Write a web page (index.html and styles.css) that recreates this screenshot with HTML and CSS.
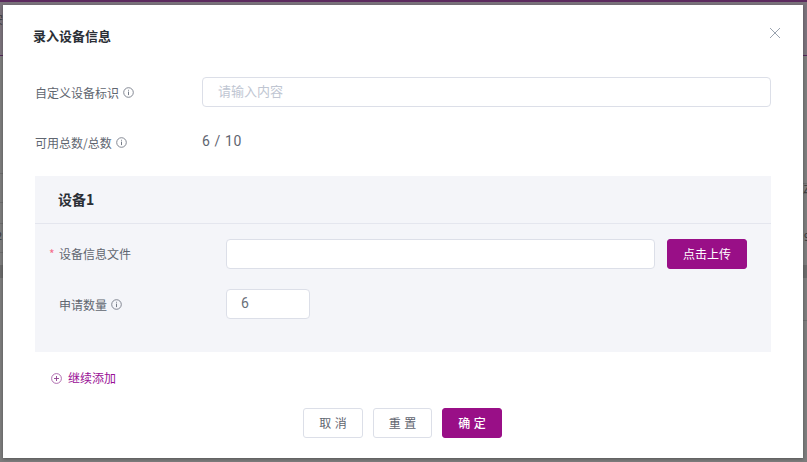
FILE: index.html
```html
<!DOCTYPE html>
<html lang="zh">
<head>
<meta charset="utf-8">
<title>录入设备信息</title>
<link rel="stylesheet" href="styles.css">
</head>
<body>
<div class="backdrop">
  <div class="bg-header"></div>
  <div class="bg-line left y173"></div>
  <div class="bg-line left y202"></div>
  <div class="bg-line left y223"></div>
  <div class="bg-line left y252"></div>
  <div class="bg-line right y183"></div>
  <div class="bg-line right y193"></div>
  <div class="bg-line right y320"></div>
  <div class="bg-block"></div>
  <span class="bg-text t1">安</span>
  <span class="bg-text t2">2</span>
  <span class="bg-text t3">Z</span>
  <span class="bg-text t4">9</span>
</div>
<section class="modal">
  <header class="modal-head">
    <h2 class="title">录入设备信息</h2>
    <svg class="close" width="12" height="12" viewBox="0 0 12 12"><path d="M1 1l10 10M11 1L1 11" stroke="#9aa3af" fill="none"/></svg>
  </header>
  <div class="row row-name">
    <div class="label">自定义设备标识<svg class="info" width="11" height="11" viewBox="0 0 11 11"><circle cx="5.5" cy="5.5" r="4.8" fill="none" stroke="#767c88" stroke-width=".9"/><path d="M5.5 2.8v.9M5.5 4.6v3.5" stroke="#767c88"/></svg></div>
    <div class="input wide placeholder">请输入内容</div>
  </div>
  <div class="row row-total">
    <div class="label">可用总数/总数<svg class="info" width="11" height="11" viewBox="0 0 11 11"><circle cx="5.5" cy="5.5" r="4.8" fill="none" stroke="#767c88" stroke-width=".9"/><path d="M5.5 2.8v.9M5.5 4.6v3.5" stroke="#767c88"/></svg></div>
    <div class="count">6 / 10</div>
  </div>
  <div class="device">
    <div class="device-head">设备1</div>
    <div class="device-body">
      <div class="drow">
        <div class="dlabel lifted"><span class="req">*</span>设备信息文件</div>
        <div class="input file"></div>
        <button class="btn primary upload">点击上传</button>
      </div>
      <div class="drow">
        <div class="dlabel">申请数量<svg class="info" width="11" height="11" viewBox="0 0 11 11"><circle cx="5.5" cy="5.5" r="4.8" fill="none" stroke="#767c88" stroke-width=".9"/><path d="M5.5 2.8v.9M5.5 4.6v3.5" stroke="#767c88"/></svg></div>
        <div class="input qty">6</div>
      </div>
    </div>
  </div>
  <div class="add">
    <svg width="11" height="11" viewBox="0 0 11 11"><circle cx="5.5" cy="5.5" r="4.9" fill="none" stroke="#a860a8" stroke-width=".9"/><path d="M3 5.5h5M5.5 3v5" stroke="#8f3f90" stroke-width=".9"/></svg>
    <span class="add-text">继续添加</span>
  </div>
  <footer class="foot">
    <button class="btn plain">取 消</button>
    <button class="btn plain narrow">重 置</button>
    <button class="btn primary ok">确 定</button>
  </footer>
</section>
</body>
</html>
```
FILE: styles.css
```css
* { box-sizing: border-box; }
html, body { margin: 0; height: 100%; }
body {
  width: 807px; height: 462px; overflow: hidden; position: relative;
  background: #7c7c7c;
  font-family: "Noto Sans CJK SC", "Liberation Sans", sans-serif;
  font-size: 12px; color: #606670;
  padding: 5px 4px 4px 3px;
}
.backdrop { position: absolute; inset: 0; }
.bg-header { position: absolute; left: 0; right: 0; top: 0; height: 56px; background: #7a727b; border-top: 2px solid #5c2a5e; border-bottom: 1px solid #54285a; }
.bg-line { position: absolute; width: 4px; height: 1px; background: #6c6c6c; }
.left { left: 0; }
.right { right: 0; }
.y173 { top: 173px; }
.y202 { top: 202px; }
.y223 { top: 223px; }
.y252 { top: 252px; }
.y183 { top: 183px; }
.y193 { top: 193px; }
.y320 { top: 320px; }
.bg-block { position: absolute; left: 0; right: 0; top: 265px; height: 13px; background: #6a6a6a; }
.bg-text { position: absolute; font-size: 11px; line-height: 12px; color: #3a3a3a; }
.t1 { left: -8px; top: 13px; }
.t2 { left: -4px; top: 229px; }
.t3 { right: -3px; top: 182px; }
.t4 { right: -3px; top: 230px; }
.modal {
  position: relative; width: 800px; height: 453px; background: #fff;
  box-shadow: 0 1px 3px rgba(0,0,0,.3);
  display: flex; flex-direction: column;
  padding: 0 32px;
}
.modal-head { height: 55px; display: flex; align-items: center; justify-content: space-between; padding-top: 6px; }
.title { margin: 0 0 0 -2px; font-size: 13px; line-height: 18px; font-weight: 700; color: #2b2f36; }
.close { margin-right: -10px; margin-top: -6px; }
.row { display: flex; align-items: center; }
.row-name { margin-top: 17px; height: 30px; }
.row-total { margin-top: 20px; height: 30px; }
.label { width: 167px; display: flex; align-items: center; gap: 4px; }
.info { flex: none; }
.input { height: 30px; border: 1px solid #dcdfe8; border-radius: 4px; background: #fff; display: flex; align-items: center; }
.wide { width: 569px; padding: 0 0 4px 15px; font-size: 13px; }
.placeholder { color: #c0c6d2; }
.count { font-family: Roboto, sans-serif; font-size: 14px; letter-spacing: .6px; color: #5f6570; margin-top: -3px; }
.device { margin-top: 19px; height: 176px; width: 736px; background: #f4f5f9; }
.device-head { height: 48px; border-bottom: 1px solid #e4e6ee; padding: 0 0 2px 23px; display: flex; align-items: center; font-size: 14px; font-weight: 700; color: #2b2f36; }
.device-body { padding-top: 15px; }
.drow { display: flex; align-items: center; height: 30px; margin-bottom: 20px; position: relative; }
.dlabel { width: 191px; padding-left: 24px; position: relative; display: flex; align-items: center; gap: 4px; }
.lifted { padding-bottom: 2px; }
.req { position: absolute; left: 14px; color: #f56c8c; }
.file { width: 429px; }
.qty { width: 84px; padding: 0 0 3px 14px; font-family: Roboto, sans-serif; font-size: 14px; color: #6a6f78; }
.btn { font-family: inherit; font-size: 12px; height: 30px; border-radius: 3px; padding: 0; cursor: pointer; line-height: 1; }
.primary { background: #990f87; border: 1px solid #990f87; color: #fff; }
.upload { width: 80px; margin-left: 12px; }
.add { display: flex; align-items: center; gap: 6px; margin-top: 18px; margin-left: 16px; height: 16px; color: #9a0f96; }
.add-text { margin-top: -2px; }
.foot { display: flex; justify-content: center; gap: 10px; margin-top: 22px; padding-right: 1px; }
.plain { width: 60px; background: #fff; border: 1px solid #dcdfe8; color: #5f6570; word-spacing: 1px; }
.plain.narrow { width: 59px; }
.ok { width: 60px; font-weight: 500; word-spacing: 1px; }
```
